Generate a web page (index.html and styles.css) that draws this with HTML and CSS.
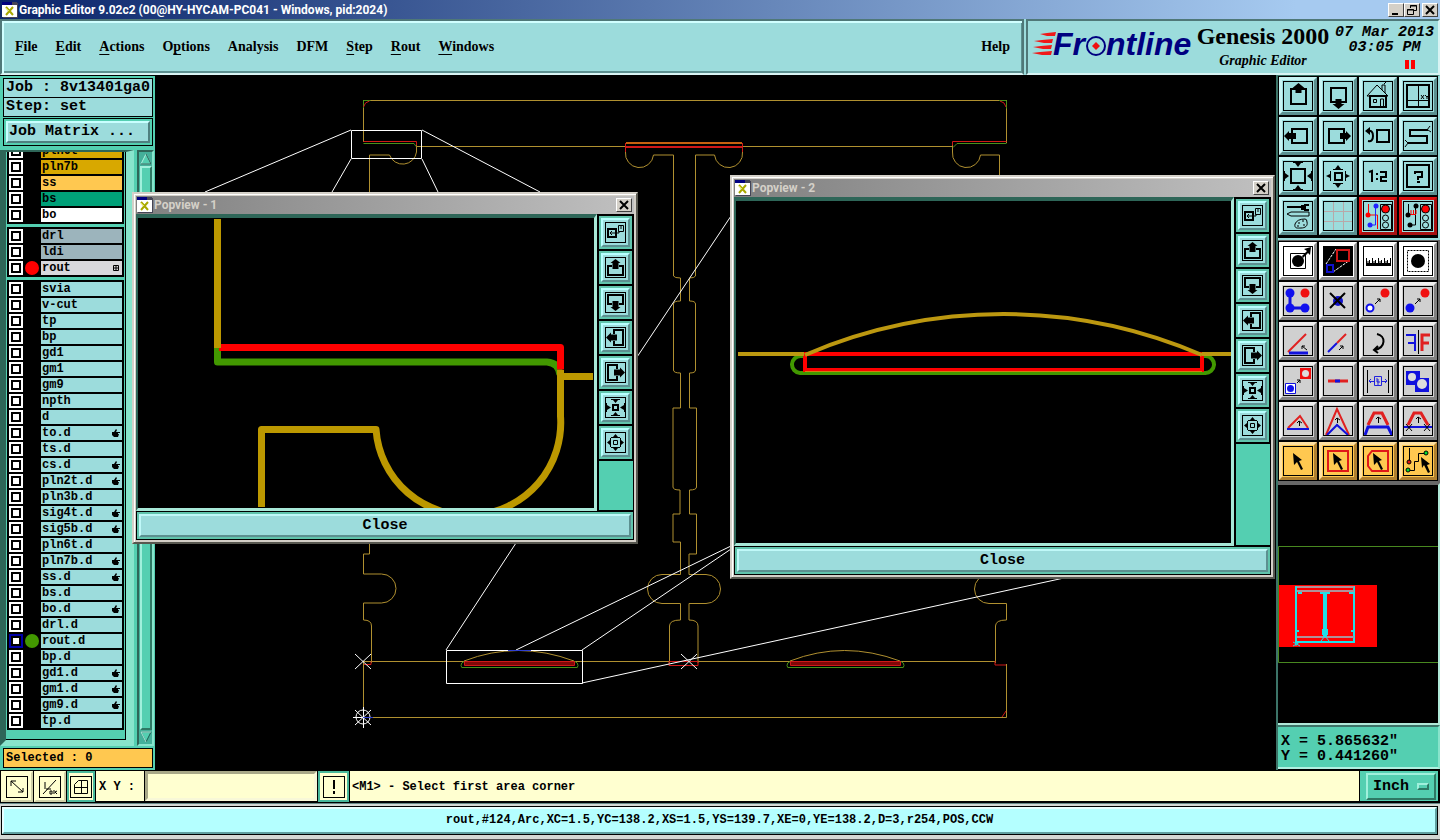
FILE: index.html
```html
<!DOCTYPE html>
<html lang="en">
<head>
<meta charset="utf-8">
<title>Graphic Editor 9.02c2</title>
<link rel="stylesheet" href="styles.css">
</head>
<body>
<svg class="defs" aria-hidden="true">
  <symbol id="app" viewBox="0 0 16 16"><path fill="#fff" d="M0 0h15v15H0z"/><path fill="#000080" d="M0 0h10v3H0z"/><path fill="#445" d="M10 0h5v3h-5zM15 1h1v15H1v-1h14z"/><path d="M4 5l7 8M11 5l-7 8" stroke="#a8a800" stroke-width="2"/><path d="M4 6l3 3" stroke="#e8e860"/></symbol>
  <symbol id="x" viewBox="0 0 12 12"><path d="M2 2l8 8M10 2l-8 8" stroke="#000" stroke-width="2"/></symbol>
  <symbol id="hand" viewBox="0 0 8 8"><path d="M0 3h2l2-3 1 1-1 2h4v1H6v1h1L6 8H2L0 6z"/></symbol>
  <symbol id="s-pop" viewBox="1 1 19 19"><g fill="none" stroke="#000"><path stroke-width="2" d="M3 7h8v8H3z"/><path d="M5 11h9V9M7 9l-2 2 2 2M13.500 3.500h5v6h-5zM16 3v4"/></g></symbol>
  <symbol id="s-up" viewBox="1 1 19 19"><path fill="none" stroke="#000" stroke-width="2" d="M7 9H3v9h15V9h-4"/><path d="M10.500 2l5 4h-2v6h-6V6h-2z"/></symbol>
  <symbol id="s-down" viewBox="1 1 19 19"><path fill="none" stroke="#000" stroke-width="2" d="M7 12H3V3h15v9h-4"/><path d="M10.500 19l5-4h-2V9h-6v6h-2z"/></symbol>
  <symbol id="s-left" viewBox="1 1 19 19"><path fill="none" stroke="#000" stroke-width="2" d="M9 7V3h9v15H9v-4"/><path d="M1 10.500l5-5v2h6v6H6v2z"/></symbol>
  <symbol id="s-right" viewBox="1 1 19 19"><path fill="none" stroke="#000" stroke-width="2" d="M12 7V3H3v15h9v-4"/><path d="M20 10.500l-5-5v2H9v6h6v2z"/></symbol>
  <symbol id="s-in" viewBox="1 1 19 19"><path fill="none" stroke="#000" stroke-width="2" d="M8 8h5v5H8z"/><path d="M6 2h9v1h-2l-2.500 3L8 3H6zM6 19h9v-1h-2l-2.500-3L8 18H6zM1 6h1v2l4 2.500L2 13v2H1zM20 6h-1v2l-4 2.500 4 2.500v2h1z"/></symbol>
  <symbol id="s-out" viewBox="1 1 19 19"><path fill="none" stroke="#000" d="M8.500 8.500h4v4h-4z"/><path d="M6 6V5h2l2.500-3L13 5h2v1zM6 15v1h2l2.500 3L13 16h2v-1zM6 6H5v2l-3 2.500L5 13v2h1zM15 6h1v2l3 2.500L16 13v2h-1z"/></symbol>
</svg>

<header class="titlebar">
  <svg class="app"><use href="#app"/></svg>
  <h1 class="caption">Graphic Editor 9.02c2 (00@HY-HYCAM-PC041 - Windows, pid:2024)</h1>
  <button class="winbtn" aria-label="Minimize"><svg viewBox="0 0 12 12"><path d="M2 9h6v2H2z"/></svg></button>
  <button class="winbtn" aria-label="Restore"><svg viewBox="0 0 12 12"><path fill="none" stroke="#000" d="M4.500 4V1.500h6v5H8M4 2h7M1.500 5.500h6v5h-6zM1 6h7"/></svg></button>
  <button class="winbtn apart" aria-label="Close"><svg><use href="#x"/></svg></button>
</header>

<div class="banner">
  <nav class="menu">
    <button><u>F</u>ile</button><button><u>E</u>dit</button><button><u>A</u>ctions</button><button>O<u>p</u>tions</button><button>Analysis</button><button>DFM</button><button><u>S</u>tep</button><button><u>R</u>out</button><button><u>W</u>indows</button>
    <button class="help">Help</button>
  </nav>
  <div class="brand">
    <svg class="logo" viewBox="1031 24 164 50" role="img" aria-label="Frontline">
      <g fill="#f01818"><path d="M1040 37l7-1 9-1-1 4h-8zM1034 44l8-1 11-1-1 4h-8zM1033 50l8-1 11-1-1 4h-8zM1032 56l8-1 12-1-1 4h-9z"/></g>
      <g font-family="Liberation Sans, Arial, sans-serif" font-size="32" font-weight="bold" font-style="italic" fill="#000080"><text x="1053" y="58">Fr</text><text x="1106" y="58">ntline</text></g>
      <circle cx="1096" cy="49" r="9" fill="none" stroke="#000080" stroke-width="2"/><path fill="#f01010" d="M1096 45l4 4-4 4-4-4z"/>
    </svg>
    <div class="product"><strong>Genesis 2000</strong><em>Graphic Editor</em></div>
    <div class="clock"><time>07 Mar 2013</time><time>03:05 PM</time><i class="pause"></i></div>
  </div>
</div>

<main class="main">
  <aside class="side">
    <div class="field">Job : 8v13401ga0</div>
    <div class="field">Step: set</div>
    <div class="slot"><button class="matrix">Job Matrix ...</button></div>
    <div class="listwrap">
      <div class="list">
        <ul class="group">
          <li><label class="layer"><input class="tick" type="checkbox"><i class="dot"></i><span class="name gold">pln6t</span></label></li>
          <li><label class="layer"><input class="tick" type="checkbox"><i class="dot"></i><span class="name gold">pln7b</span></label></li>
          <li><label class="layer"><input class="tick" type="checkbox"><i class="dot"></i><span class="name amber">ss</span></label></li>
          <li><label class="layer"><input class="tick" type="checkbox"><i class="dot"></i><span class="name green">bs</span></label></li>
          <li><label class="layer"><input class="tick" type="checkbox"><i class="dot"></i><span class="name white">bo</span></label></li>
        </ul>
        <ul class="group">
          <li><label class="layer"><input class="tick" type="checkbox"><i class="dot"></i><span class="name slate">drl</span></label></li>
          <li><label class="layer"><input class="tick" type="checkbox"><i class="dot"></i><span class="name slate">ldi</span></label></li>
          <li><label class="layer"><input class="tick" type="checkbox"><i class="dot red"></i><span class="name grey">rout<svg class="mark" viewBox="0 0 8 8"><path fill="none" stroke="#000" d="M1.500 1.500h5v5h-5zM4 1v6M1 4h6"/></svg></span></label></li>
        </ul>
        <ul class="group">
          <li><label class="layer"><input class="tick" type="checkbox"><i class="dot"></i><span class="name">svia</span></label></li>
          <li><label class="layer"><input class="tick" type="checkbox"><i class="dot"></i><span class="name">v-cut</span></label></li>
          <li><label class="layer"><input class="tick" type="checkbox"><i class="dot"></i><span class="name">tp</span></label></li>
          <li><label class="layer"><input class="tick" type="checkbox"><i class="dot"></i><span class="name">bp</span></label></li>
          <li><label class="layer"><input class="tick" type="checkbox"><i class="dot"></i><span class="name">gd1</span></label></li>
          <li><label class="layer"><input class="tick" type="checkbox"><i class="dot"></i><span class="name">gm1</span></label></li>
          <li><label class="layer"><input class="tick" type="checkbox"><i class="dot"></i><span class="name">gm9</span></label></li>
          <li><label class="layer"><input class="tick" type="checkbox"><i class="dot"></i><span class="name">npth</span></label></li>
          <li><label class="layer"><input class="tick" type="checkbox"><i class="dot"></i><span class="name">d</span></label></li>
          <li><label class="layer"><input class="tick" type="checkbox"><i class="dot"></i><span class="name">to.d<svg class="mark"><use href="#hand"/></svg></span></label></li>
          <li><label class="layer"><input class="tick" type="checkbox"><i class="dot"></i><span class="name">ts.d</span></label></li>
          <li><label class="layer"><input class="tick" type="checkbox"><i class="dot"></i><span class="name">cs.d<svg class="mark"><use href="#hand"/></svg></span></label></li>
          <li><label class="layer"><input class="tick" type="checkbox"><i class="dot"></i><span class="name">pln2t.d<svg class="mark"><use href="#hand"/></svg></span></label></li>
          <li><label class="layer"><input class="tick" type="checkbox"><i class="dot"></i><span class="name">pln3b.d</span></label></li>
          <li><label class="layer"><input class="tick" type="checkbox"><i class="dot"></i><span class="name">sig4t.d<svg class="mark"><use href="#hand"/></svg></span></label></li>
          <li><label class="layer"><input class="tick" type="checkbox"><i class="dot"></i><span class="name">sig5b.d<svg class="mark"><use href="#hand"/></svg></span></label></li>
          <li><label class="layer"><input class="tick" type="checkbox"><i class="dot"></i><span class="name">pln6t.d</span></label></li>
          <li><label class="layer"><input class="tick" type="checkbox"><i class="dot"></i><span class="name">pln7b.d<svg class="mark"><use href="#hand"/></svg></span></label></li>
          <li><label class="layer"><input class="tick" type="checkbox"><i class="dot"></i><span class="name">ss.d<svg class="mark"><use href="#hand"/></svg></span></label></li>
          <li><label class="layer"><input class="tick" type="checkbox"><i class="dot"></i><span class="name">bs.d</span></label></li>
          <li><label class="layer"><input class="tick" type="checkbox"><i class="dot"></i><span class="name">bo.d<svg class="mark"><use href="#hand"/></svg></span></label></li>
          <li><label class="layer"><input class="tick" type="checkbox"><i class="dot"></i><span class="name">drl.d</span></label></li>
          <li><label class="layer"><input class="tick" type="checkbox" checked><i class="dot leaf"></i><span class="name">rout.d</span></label></li>
          <li><label class="layer"><input class="tick" type="checkbox"><i class="dot"></i><span class="name">bp.d</span></label></li>
          <li><label class="layer"><input class="tick" type="checkbox"><i class="dot"></i><span class="name">gd1.d<svg class="mark"><use href="#hand"/></svg></span></label></li>
          <li><label class="layer"><input class="tick" type="checkbox"><i class="dot"></i><span class="name">gm1.d<svg class="mark"><use href="#hand"/></svg></span></label></li>
          <li><label class="layer"><input class="tick" type="checkbox"><i class="dot"></i><span class="name">gm9.d<svg class="mark"><use href="#hand"/></svg></span></label></li>
          <li><label class="layer"><input class="tick" type="checkbox"><i class="dot"></i><span class="name">tp.d</span></label></li>
        </ul>
      </div>
      <div class="scroll">
        <svg class="arrow" viewBox="0 0 12 12"><path fill="#54cfb1" stroke="#b0f0e0" d="M1 11L6 1l5 10z"/><path stroke="#1c5c50" d="M6 1l5 10H1"  fill="none"/></svg>
        <div class="thumb"></div>
        <svg class="arrow" viewBox="0 0 12 12"><path fill="#54cfb1" stroke="#1c5c50" d="M1 1l5 10L11 1z"/><path stroke="#b0f0e0" fill="none" d="M11 1H1l5 10"/></svg>
      </div>
    </div>
    <div class="field selected">Selected : 0</div>
  </aside>

  <div class="canvas">
    <svg class="art" viewBox="155 75 1121 695" preserveAspectRatio="xMinYMin meet" fill="none">
      <g stroke="#b09030">
        <path d="M363.500 100.500H1006M363.500 100v42M1006.500 100v43M416 146.500h210M742 146.500h210"/>
        <path d="M416.500 142v10a14 14 0 0 1-27 3h-20v399h-6v20h18a14 14 0 0 1 0 29h-18v17q8 0 8 6v37"/>
        <path d="M625.500 147v5a14 14 0 0 0 28 3h20V276q1 2 7 2V301q-7 0-7 3V370q0 3 7 3V408H673V487q0 3 7 3V514H673V542H680.500V574.500H662a14 14 0 0 0 0 29H680.500V620q-11 0-11 6V663"/>
        <path d="M742.500 147v5a14 14 0 0 1-28 3h-19V276q-1 2-6 2V301q6 0 6 3V370q0 3-6 3V408H696.500V487q0 3-7 3V514H696.500V554H689V574.500H706a14 14 0 0 1 0 29H689V620q9 0 9 6V663"/>
        <path d="M952.500 143v9a14 14 0 0 0 28 3h19V554h7v20.500H989a14 14 0 0 0 0 29h17.500V620q-11 0-11 6V663"/>
        <path d="M363.500 661.500h632M363.500 661v56.500H1006.500V664"/>
        <path d="M464 661q54-21 110 0M790 661q54-21 110 0"/>
      </g>
      <g stroke="#489018"><path d="M363.500 143.500H414l2 3M1006.500 143.500H957l-4 4M363.500 108v-7.500h7M999 100.500h7.500v8M464 661.500q-3 1-3 4t3 2h111q3 1 3-2t-3-4M790 661.500q-3 1-3 4t3 2h111q3 1 3-2t-3-4"/></g>
      <g stroke="#d01818"><path d="M363.500 141.500h53v4M1006.500 141.500h-54v4M363.500 107q1-5 6-6M1000 101q5 1 6 6M625.500 152v-9M742.500 152v-9M464.500 661.500h110v4h-110zM790.500 661.500h110v4h-110zM364 664.500h7v-3M995 661v4h11M669 661.500h29v4h-29zM1002 717l4-6"/><path stroke-width="2" d="M626 147h116"/><path stroke="#c86010" stroke-width="2" d="M626 143h116"/></g>
      <path fill="#800808" d="M465 662h109v3H465zM791 662h109v3H791z"/>
      <g stroke="#fff">
        <path d="M351.500 130.500h70v28h-70zM351 130l-146 62M351 159l-19 33M422 130l118 62M422 159l16 33M446.500 650.500h136v33h-136zM446 650l70-107M516 650l215-104M582 650l149-101M582 683l482-105M637 357l94-141"/>
        <path d="M355 654l16 15M371 654l-16 15M681 654l16 15M697 654l-16 15M355 710l16 15M371 710l-16 15M353 717.500h20M363.500 707v21"/><circle cx="363" cy="717" r="7"/>
      </g>
      <path stroke="#3040d0" d="M508 650.500h23M363 717.500h10"/>
    </svg>
  </div>

  <aside class="tools">
    <div class="palette">
      <button class="tool" aria-label="Pan up"><svg viewBox="1 1 28 28"><path fill="none" stroke="#000" stroke-width="2" d="M8 8h15v15H8z"/><path d="M15.500 2l6 5h-3v5h-6V7h-3z"/></svg></button>
      <button class="tool" aria-label="Pan down"><svg viewBox="1 1 28 28"><path fill="none" stroke="#000" stroke-width="2" d="M8 7h15v14H8z"/><path d="M15.500 28l6-5h-3v-5h-6v5h-3z"/></svg></button>
      <button class="tool" aria-label="Home"><svg viewBox="1 1 28 28"><g fill="none" stroke="#000"><path stroke-width="2" d="M7 15h16v11H7z"/><path d="M4 15L14 4l11 11zM19 9V4h3v8M21 3l2-2M10.500 18.500h3v3h-3zM17.500 26v-8h3v8"/></g></svg></button>
      <button class="tool" aria-label="Zoom at XY"><svg viewBox="1 1 28 28"><path fill="none" stroke="#000" stroke-width="2" d="M4 4h22v22H4z"/><path fill="none" stroke="#000" d="M15.500 4v22M4 19.500h22M18 14l3 4M21 14l-3 4M22 14l2 2 2-2M24 16v2"/></svg></button>
      <button class="tool" aria-label="Pan left"><svg viewBox="1 1 28 28"><path fill="none" stroke="#000" stroke-width="2" d="M9 8h15v14H9z"/><path d="M1 15l5-5v2h7v6H6v2z"/></svg></button>
      <button class="tool" aria-label="Pan right"><svg viewBox="1 1 28 28"><path fill="none" stroke="#000" stroke-width="2" d="M6 8h15v14H6z"/><path d="M28 15l-5-5v2h-6v6h6v2z"/></svg></button>
      <button class="tool" aria-label="Previous view"><svg viewBox="1 1 28 28"><g fill="none" stroke="#000" stroke-width="2"><path d="M14 9h12v12H14z"/><path d="M5 10q5-1 5 5t-5 5"/></g><path d="M2 10l5-4v8z"/></svg></button>
      <button class="tool" aria-label="Serpentine view"><svg viewBox="1 1 28 28"><path fill="none" stroke="#000" stroke-width="2" d="M25 9H7v6h17v7H5"/><path fill="none" stroke="#000" d="M24 9l3-4M25 9l3 2M5 22l-3-3M5 22l-3 4"/></svg></button>
      <button class="tool" aria-label="Zoom in"><svg viewBox="1 1 28 28"><path fill="none" stroke="#000" stroke-width="2" d="M8 8h14v14H8z"/><path d="M10 1h10v1h-2l-3 4-3-4h-2zM10 29h10v-1h-2l-3-4-3 4h-2zM1 10v10h1v-2l4-3-4-3v-2zM29 10v10h-1v-2l-4-3 4-3v-2z"/></svg></button>
      <button class="tool" aria-label="Zoom out"><svg viewBox="1 1 28 28"><path fill="none" stroke="#000" stroke-width="2" d="M12 12h7v7h-7z"/><path d="M10 9V8h2l3-4 3 4h2v1zM10 22v1h2l3 4 3-4h2v-1zM8 10H7v3l-4 2 4 2v3h1zM22 10h1v3l4 2-4 2v3h-1z"/></svg></button>
      <button class="tool" aria-label="Zoom one to two"><svg viewBox="1 1 28 28"><path fill="none" stroke="#000" stroke-width="2" d="M6 11l3-1v11M13 13h2M13 18h2M17 11h6v5h-5v4h6"/></svg></button>
      <button class="tool" aria-label="Query"><svg viewBox="1 1 28 28"><path fill="none" stroke="#000" stroke-width="2" d="M4 4h22v22H4zM12 13v-2h7v5h-4v3M14 21h3"/></svg></button>
      <button class="tool" aria-label="Settings"><svg viewBox="1 1 28 28"><path d="M4 5h15v2H4zM18 4h4v5h-4zM21 3h5v2h-3v3h3v2h-5z"/><path fill="none" stroke="#000" d="M4 13l4-2h18v4H8zM22 18q-8 0-10 5c-1 5 3 4 6 4 4 0 7-2 6-6q0-3-2-3zM15 22h2M19 20h2M14 25h2M20 24h2"/></svg></button>
      <button class="tool" aria-label="Grid"><svg viewBox="1 1 28 28"><path fill="none" stroke="#b8a8a8" d="M10.500 1v28M20.500 1v28M1 10.500h28M1 20.500h28"/></svg></button>
      <button class="tool alert" aria-label="Snap layer"><svg viewBox="1 1 28 28"><g fill="none"><path stroke="#f00" d="M5.500 3v11h9v14"/><path stroke="#22f" d="M12.500 6v18H6"/><path stroke="#000" d="M17.500 3.500h11v25h-11z"/></g><g fill="#f00"><circle cx="5" cy="14" r="2.500"/><circle cx="22.500" cy="8" r="4" stroke="#000"/></g><g fill="#22f"><circle cx="13" cy="5" r="2.500"/><circle cx="7" cy="24" r="2.500"/></g><g fill="none" stroke="#000"><circle cx="22.500" cy="17" r="3"/><circle cx="22.500" cy="24" r="3"/></g></svg></button>
      <button class="tool alert" aria-label="Snap profile"><svg viewBox="1 1 28 28"><g fill="none" stroke="#000"><path d="M5.500 3v10M12.500 5v19H7M17.500 3.500h11v25h-11z"/><circle cx="22.500" cy="17" r="3"/><circle cx="22.500" cy="24" r="3"/></g><circle cx="22.500" cy="8" r="4" fill="#f00" stroke="#000"/><path d="M6 13.500h7M8 9v4M10.500 9v4M13 9v4" stroke="#f00"/><circle cx="5" cy="14" r="2.500"/><circle cx="13" cy="5" r="2.500"/><circle cx="7" cy="24" r="2.500"/></svg></button>
    </div>
    <div class="palette ops">
      <button class="tool paper" aria-label="Select feature"><svg viewBox="1 1 28 28"><path fill="none" stroke="#000" d="M7.500 7.500h15v15h-15z"/><circle cx="15" cy="15" r="6"/><path d="M19 10l5-5-3-2 7-2-1 8-2-2-5 5z"/></svg></button>
      <button class="tool paper" aria-label="Popview"><svg viewBox="1 1 28 28"><path fill="#000" d="M1 1h28v28H1z"/><path stroke="#fff" stroke-dasharray="3 1" d="M3 18L13 3M10 26l17-12"/><path fill="none" stroke="#d01818" stroke-width="2" d="M14 4h12v11H14z"/><path fill="none" stroke="#11c" stroke-width="2" d="M4 19h6v7H4z"/></svg></button>
      <button class="tool paper" aria-label="Measure"><svg viewBox="1 1 28 28"><path d="M3 17h25v3H3z"/><path stroke="#000" d="M3.500 12v6M6.500 14v4M9.500 12v6M12.500 14v4M15.500 12v6M18.500 14v4M21.500 12v6M24.500 14v4M27.500 12v6M5 15v3M11 15v3M17 15v3M23 15v3"/></svg></button>
      <button class="tool paper" aria-label="Area select"><svg viewBox="1 1 28 28"><path fill="none" stroke="#000" stroke-dasharray="2 1" d="M4.500 4.500h21v21h-21z"/><circle cx="15" cy="15" r="7"/></svg></button>

      <button class="tool ash" aria-label="Chain"><svg viewBox="1 1 28 28"><path stroke="#11d" stroke-width="3" fill="none" d="M7 7v15h15"/><g fill="#11e"><circle cx="7" cy="7" r="4.500"/><circle cx="7" cy="22" r="4.500"/><circle cx="22" cy="22" r="4.500"/></g><circle cx="22" cy="7" r="4.500" fill="#f01010"/></svg></button>
      <button class="tool ash" aria-label="Delete"><svg viewBox="1 1 28 28"><circle cx="15" cy="15" r="5" fill="#11c"/><path stroke="#000" stroke-width="2" d="M7 7l15 15M22 7L7 22"/></svg></button>
      <button class="tool ash" aria-label="Move"><svg viewBox="1 1 28 28"><circle cx="22" cy="7" r="4.500" fill="#f01010"/><circle cx="7" cy="22" r="3.500" fill="#fff" stroke="#11e" stroke-width="2"/><path fill="none" stroke="#000" d="M12 18l5-5M14 13h3v3"/></svg></button>
      <button class="tool ash" aria-label="Copy"><svg viewBox="1 1 28 28"><circle cx="22" cy="7" r="4.500" fill="#f01010"/><circle cx="7" cy="22" r="4.500" fill="#11e"/><path fill="none" stroke="#000" d="M12 18l5-5M14 13h3v3"/></svg></button>

      <button class="tool ash" aria-label="Rotate line"><svg viewBox="1 1 28 28"><path stroke="#e02020" stroke-width="2" d="M5 26L23 8"/><path stroke="#11d" stroke-width="3" d="M6 27h19"/><path fill="none" stroke="#000" d="M24 24l-5-4M19 23v-3h3"/></svg></button>
      <button class="tool ash" aria-label="Extend line"><svg viewBox="1 1 28 28"><path stroke="#11d" stroke-width="2" d="M5 26l9-9"/><path stroke="#e02020" stroke-width="2" d="M14 17l9-9"/><path fill="none" stroke="#000" d="M16 24l4-4M17 20h3v3"/></svg></button>
      <button class="tool ash" aria-label="Rotate"><svg viewBox="1 1 28 28"><path fill="none" stroke="#000" stroke-width="2" d="M14 8c9 2 9 13-2 16M15 20l-4 4 4 3"/></svg></button>
      <button class="tool ash" aria-label="Mirror"><svg viewBox="1 1 28 28"><path fill="none" stroke="#11d" stroke-width="2" d="M3 9h9v16M5 17h7"/><path fill="none" stroke="#e02020" stroke-width="3" d="M27 9h-8v16M19 17h7"/><path stroke="#000" d="M15.500 4v24"/></svg></button>

      <button class="tool ash" aria-label="Copy to layer"><svg viewBox="1 1 28 28"><path fill="#fff" stroke="#11d" d="M2.500 17.500h10v10h-10z"/><circle cx="7.500" cy="22.500" r="3.500" fill="#11e"/><path fill="#f01010" d="M17 2h11v11H17z"/><circle cx="22.500" cy="7.500" r="3.500" fill="#ddd"/><path fill="none" stroke="#000" d="M14 17l3-3M14 14h3v3"/></svg></button>
      <button class="tool ash" aria-label="Split"><svg viewBox="1 1 28 28"><path stroke="#e02020" stroke-width="3" d="M5 15h20"/><path stroke="#11d" stroke-width="3" d="M12 15h5"/></svg></button>
      <button class="tool ash" aria-label="Spacing"><svg viewBox="1 1 28 28"><path stroke="#000" d="M4.500 4v23M25.500 4v23"/><path fill="none" stroke="#22d" d="M6 15.500h5M19 15.500h5M8 13l-2 2 2 2M22 13l2 2-2 2M11.500 10.500h7v9h-7zM14 12v4h3M15 13v6"/></svg></button>
      <button class="tool ash" aria-label="Merge"><svg viewBox="1 1 28 28"><path fill="#11d" d="M3 5h14v7h9v14H12v-7H3z"/><circle cx="9" cy="11" r="4" fill="#ddd"/><circle cx="19" cy="18" r="5" fill="#ddd"/></svg></button>

      <button class="tool ash" aria-label="Stretch one"><svg viewBox="1 1 28 28"><path fill="none" stroke="#e02020" stroke-width="2" d="M5 22L17 10l8 12"/><path stroke="#11d" stroke-width="2" d="M4 23h22"/><path fill="none" stroke="#000" d="M16.500 20v-5M14 17l2-2 3 2"/></svg></button>
      <button class="tool ash" aria-label="Stretch two"><svg viewBox="1 1 28 28"><path fill="none" stroke="#e02020" stroke-width="2" d="M3 29L14 3l12 26"/><path fill="none" stroke="#11d" stroke-width="2" d="M4 29l10-10 11 10"/><path fill="none" stroke="#000" d="M14.500 17v-5M12 14l2-2 3 2"/></svg></button>
      <button class="tool ash" aria-label="Stretch three"><svg viewBox="1 1 28 28"><path fill="none" stroke="#e02020" stroke-width="3" d="M5 19l6-12h8l6 12"/><path fill="none" stroke="#11d" stroke-width="3" d="M2 29l3-8h20l4 8"/><path fill="none" stroke="#000" d="M15.500 17v-6M13 13l2-2 3 2"/></svg></button>
      <button class="tool ash" aria-label="Stretch four"><svg viewBox="1 1 28 28"><path fill="none" stroke="#e02020" stroke-width="3" d="M5 19l6-12h7l7 12"/><path stroke="#11d" stroke-width="2" d="M1 21h28"/><path fill="none" stroke="#000" d="M15.500 17v-6M13 13l2-2 3 2M3 18l6 7M9 18l-6 7M21 18l6 7M27 18l-6 7"/></svg></button>

      <button class="tool sun" aria-label="Pointer"><svg viewBox="1 1 28 28"><path d="M10 7l9 7-3 1 4 8-2 1-4-8-3 3z"/></svg></button>
      <button class="tool sun" aria-label="Pointer in box"><svg viewBox="1 1 28 28"><path fill="none" stroke="#e01818" stroke-width="2" d="M5 5h20v20H5z"/><path d="M10 7l9 7-3 1 4 8-2 1-4-8-3 3z"/></svg></button>
      <button class="tool sun" aria-label="Pointer in polygon"><svg viewBox="1 1 28 28"><path fill="none" stroke="#e01818" stroke-width="2" d="M9 5h16v20H9l-4-5V10z"/><path d="M10 7l9 7-3 1 4 8-2 1-4-8-3 3z"/></svg></button>
      <button class="tool sun" aria-label="Pointer on net"><svg viewBox="1 1 28 28"><path fill="none" stroke="#000" d="M6.500 2v14M6 24.500h5.500v-9h4v-8H23"/><circle cx="6" cy="16" r="2" fill="#e01010" stroke="#000"/><circle cx="23" cy="7" r="2" fill="#0d3" stroke="#000"/><circle cx="5" cy="24" r="2" fill="#0d3" stroke="#000"/><path d="M18 11l9 7-3 1 3 7-2 1-4-8-2 3z"/></svg></button>
    </div>
    <svg class="overview" viewBox="1278 486 160 238" preserveAspectRatio="xMinYMin meet" role="img" aria-label="Overview">
      <path fill="#f00" d="M1278 586h99v62h-99z"/>
      <path fill="none" stroke="#488820" d="M1438 547.500h-159.500v116H1438"/>
      <g fill="none" stroke="#20e0e8" stroke-width="2"><path d="M1296 588h58v55h-58zM1296 638h58"/><path stroke="#b09098" d="M1297 588h57M1297 592h57M1297 638h57"/><path stroke-width="4" d="M1325 593v45"/><path d="M1320 594h10M1298 594h4M1349 594h4M1295 632h4M1351 632h4"/><path stroke-width="6" d="M1322 633h6"/><path stroke-width="1" d="M1293 643l7 4M1300 643l-7 4M1296 636v11M1321 642l4-5 4 5"/></g>
    </svg>
    <div class="coords"><div>X = 5.865632"</div><div>Y = 0.441260"</div></div>
  </aside>

  <section class="popview first">
    <header class="poptitle"><svg class="app"><use href="#app"/></svg><h2 class="caption">Popview - 1</h2><button class="winbtn" aria-label="Close"><svg><use href="#x"/></svg></button></header>
    <div class="popbody">
      <svg class="popart" viewBox="138 218 456 290" preserveAspectRatio="xMinYMin meet" fill="none" stroke-width="7">
        <path stroke="#429800" stroke-linejoin="round" d="M217.500 345v17H547q12 1 13 13"/>
        <path stroke="#f00" stroke-linejoin="round" d="M219 347.500h341.500v22"/>
        <g stroke="#bc9800"><path d="M217.500 219v129" /><path stroke-linejoin="round" d="M560.500 370v46A92 92 0 0 1 376 429.500H261.500V507M562 376.500h31"/></g>
      </svg>
      <div class="poptools">
        <div class="cell"><button aria-label="Grab view"><svg><use href="#s-pop"/></svg></button></div>
        <div class="cell"><button aria-label="Up"><svg><use href="#s-up"/></svg></button></div>
        <div class="cell"><button aria-label="Down"><svg><use href="#s-down"/></svg></button></div>
        <div class="cell"><button aria-label="Left"><svg><use href="#s-left"/></svg></button></div>
        <div class="cell"><button aria-label="Right"><svg><use href="#s-right"/></svg></button></div>
        <div class="cell"><button aria-label="Zoom in"><svg><use href="#s-in"/></svg></button></div>
        <div class="cell"><button aria-label="Zoom out"><svg><use href="#s-out"/></svg></button></div>
      </div>
    </div>
    <div class="popfoot"><button>Close</button></div>
  </section>

  <section class="popview second">
    <header class="poptitle"><svg class="app"><use href="#app"/></svg><h2 class="caption">Popview - 2</h2><button class="winbtn" aria-label="Close"><svg><use href="#x"/></svg></button></header>
    <div class="popbody">
      <svg class="popart" viewBox="736 201 495 342" preserveAspectRatio="xMinYMin meet" fill="none" stroke-width="4">
        <path stroke="#429800" d="M805 356h-4a8 8 0 0 0-1 17h405a8 8 0 0 0 1-17h-4"/>
        <path stroke="#f00" d="M805 354h397v16H805z"/>
        <path stroke="#d08010" stroke-width="1" d="M805 371.500h397"/>
        <path stroke="#bc9810" d="M738 354h66M1202 354h29M805 355A502 502 0 0 1 1202 355"/>
      </svg>
      <div class="poptools">
        <div class="cell"><button aria-label="Grab view"><svg><use href="#s-pop"/></svg></button></div>
        <div class="cell"><button aria-label="Up"><svg><use href="#s-up"/></svg></button></div>
        <div class="cell"><button aria-label="Down"><svg><use href="#s-down"/></svg></button></div>
        <div class="cell"><button aria-label="Left"><svg><use href="#s-left"/></svg></button></div>
        <div class="cell"><button aria-label="Right"><svg><use href="#s-right"/></svg></button></div>
        <div class="cell"><button aria-label="Zoom in"><svg><use href="#s-in"/></svg></button></div>
        <div class="cell"><button aria-label="Zoom out"><svg><use href="#s-out"/></svg></button></div>
      </div>
    </div>
    <div class="popfoot"><button>Close</button></div>
  </section>
</main>

<div class="command">
  <button class="cmd" aria-label="Diagonal"><svg viewBox="0 0 20 20"><path fill="none" stroke="#000" d="M4 4l12 11M4 9V4h5M16 11v4h-5"/></svg></button>
  <button class="cmd" aria-label="Angle"><svg viewBox="0 0 20 20"><path fill="none" stroke="#000" d="M3 17L16 3M5 5v7M6 12h5M10 17h2v-3h-2zM14 13v4M17 14l-2 1 2 2"/></svg></button>
  <button class="cmd on" aria-label="Grid snap"><svg viewBox="0 0 20 20"><path fill="none" stroke="#000" d="M3.500 7.500l4-4h9v13h-13zM10.500 3v13M3 10.500h13"/></svg></button>
  <label class="xy" for="xy">X Y :</label>
  <input class="entry" id="xy" type="text" autocomplete="off">
  <button class="cmd bang" aria-label="Execute"><svg viewBox="0 0 20 20"><path d="M9 3h2v9H9zM9 14h2v3H9z"/></svg></button>
  <output class="message">&lt;M1&gt; - Select first area corner</output>
  <div class="unitbox"><button class="unit">Inch<i class="knob"></i></button></div>
</div>
<footer class="status"><div class="statustext">rout,#124,Arc,XC=1.5,YC=138.2,XS=1.5,YS=139.7,XE=0,YE=138.2,D=3,r254,POS,CCW</div></footer>
</body>
</html>
```
FILE: styles.css
```css
* { box-sizing: border-box; }
html, body { height: 100%; }
body {
  margin: 0;
  display: flex;
  flex-direction: column;
  background: #000;
  color: #000;
  overflow: hidden;
  font: bold 12px "Liberation Mono", "Courier New", monospace;
}
button { font: inherit; color: inherit; padding: 0; margin: 0; border-radius: 0; }
svg { display: block; }
h1, h2, ul { margin: 0; padding: 0; }
li { list-style: none; }
.defs { display: none; }

.titlebar {
  flex: none;
  height: 19px;
  display: flex;
  align-items: center;
  padding: 0 2px;
  background: linear-gradient(90deg, #0a246a, #a6caf0 90%);
  color: #fff;
}
.app { width: 16px; height: 16px; flex: none; }
.caption { flex: 1; margin-left: 1px; font: bold 12px/18px Roboto, "Noto Sans", sans-serif; white-space: nowrap; }
.winbtn {
  width: 16px;
  height: 14px;
  display: grid;
  place-items: center;
  background: #d4d0c8;
  border: 1px solid;
  border-color: #fff #404040 #404040 #fff;
}
.winbtn svg { width: 12px; height: 12px; }
.apart { margin-left: 2px; }

.banner { flex: none; display: flex; height: 56px; background: #9cdcdc; }
.menu {
  flex: 1;
  display: flex;
  align-items: center;
  gap: 18px;
  padding: 0 12px 0 13px;
  border: 2px solid #4f7878;
  border-color: #4f7878 #4f7878 #d8f4f4 #4f7878;
  box-shadow: inset 2px 2px #d0ffff, inset -1px -2px #5c9090;
}
.menu button { border: 0; background: none; font: bold 14px/18px "Liberation Serif", "Times New Roman", serif; }
.menu u { text-underline-offset: 3px; }
.menu .help { margin-left: auto; }
.brand {
  width: 414px;
  flex: none;
  display: flex;
  margin-left: 2px;
  border: 2px solid;
  border-color: #4f7878 #d8f4f4 #d8f4f4 #4f7878;
}
.logo { width: 164px; height: 50px; margin-left: 3px; }
.product { width: 136px; display: flex; flex-direction: column; align-items: center; font-family: "Liberation Serif", serif; white-space: nowrap; }
.product strong { font-size: 24px; line-height: 30px; }
.product em { font-size: 14px; line-height: 20px; }
.clock { flex: 1; display: flex; flex-direction: column; align-items: center; font-size: 15px; line-height: 15px; font-style: italic; white-space: nowrap; padding-top: 4px; }
.pause { width: 10px; height: 9px; border: solid #f00; border-width: 0 4px; margin: 5px 0 0 50px; }

.main { flex: 1; min-height: 0; display: flex; position: relative; }
.side {
  width: 155px;
  flex: none;
  display: flex;
  flex-direction: column;
  padding: 2px 2px 2px 3px;
  border-top: 1px solid #000;
  background: #54cfb1;
}
.field, .slot { border: 1px solid #000; background: #9cdcdc; flex: none; }
.field { height: 20px; padding-left: 2px; font-size: 15px; line-height: 18px; white-space: nowrap; }
.field + .field { margin-top: -1px; }
.slot { margin-top: 1px; padding: 2px; background: #54cfb1; height: 28px; }
.matrix { width: 100%; height: 22px; text-align: left; padding-left: 1px; font-size: 15px; line-height: 16px; background: #9cdcdc; border: 2px solid; border-color: #c8ffff #4f8080 #4f8080 #c8ffff; }
.field.selected { background: #ffc850; font-size: 12px; padding-left: 2px; margin-top: 2px; }
.listwrap { flex: 1; min-height: 0; display: flex; margin: 4px 0 0 -3px; }
.list {
  width: 134px;
  flex: none;
  display: flex;
  flex-direction: column;
  justify-content: flex-end;
  gap: 3px;
  overflow: hidden;
  padding: 0 2px 10px 1px;
  border: solid;
  border-width: 2px 8px 6px 6px;
  border-color: #2e6658 #88e4cc #88e4cc #2e6658;
  box-shadow: inset 0 -1px #000, inset -1px 0 #000;
}
.group { flex: none; width: 117px; display: flex; flex-direction: column; gap: 2px; padding: 2px; background: #000; }
.layer { display: grid; grid-template-columns: 14px 18px 81px; height: 14px; align-items: center; }
.tick { appearance: none; margin: 0; width: 14px; height: 14px; border: 2px solid #fff; background: #fff; box-shadow: inset 0 0 0 2px #000; }
.tick:checked { border-color: #0000a8; }
.dot { width: 14px; height: 14px; margin-left: 2px; border-radius: 50%; }
.dot.red { background: #f00; }
.dot.leaf { background: #429800; }
.name { display: flex; justify-content: space-between; align-items: center; height: 14px; padding: 0 2px 0 1px; line-height: 14px; background: #9cdcdc; }
.gold { background: #d8a800; }
.amber { background: #ffc850; }
.green { background: #00a078; }
.white { background: #fff; }
.slate { background: #9cb4bc; }
.grey { background: #d8d8dc; }
.mark { width: 8px; height: 8px; flex: none; }
.scroll { width: 17px; margin-left: 3px; padding: 1px; display: flex; flex-direction: column; align-items: center; gap: 1px; background: #44b09a; border: solid; border-width: 2px; border-color: #2e6658 #88e4cc #88e4cc #2e6658; }
.arrow { width: 12px; height: 12px; flex: none; }
.thumb { flex: 1; width: 12px; background: #54cfb1; border: 2px solid; border-color: #a0f0dc #2e7864 #2e7864 #a0f0dc; }

.canvas { flex: 1; min-width: 0; background: #000; overflow: hidden; }
.art { width: 100%; height: 100%; }

.tools { width: 164px; flex: none; display: flex; flex-direction: column; background: #000; border-left: 2px solid #3c7468; }
.palette { flex: none; display: grid; grid-template-columns: repeat(4, 38px); gap: 2px; padding: 1px 1px 3px; border-right: 2px solid #9cdcdc; border-bottom: 2px solid #9cdcdc; border-top: 1px solid #3c7468; }
.ops { padding-bottom: 1px; border-color: #686868; }
.tool { width: 38px; height: 38px; padding: 1px; background: #9cdcdc; border: 3px solid; border-color: #c8f4f4 #5c9090 #5c9090 #c8f4f4; }
.tool svg { width: 30px; height: 30px; border: 1px solid #000; }
.paper { background: #fff; border-color: #fff #909090 #909090 #fff; }
.ash { background: #d0d0d0; border-color: #f0f0f0 #808080 #808080 #f0f0f0; }
.sun { background: #ffc850; border-color: #ffe0a0 #b08030 #b08030 #ffe0a0; }
.alert { border-color: #e01010 #a81010 #a81010 #e01010; }
.overview { flex: 1; min-height: 0; width: 162px; background: #000; border: 2px solid; border-color: #686868 #b0e8d8 #b0e8d8 #000; border-left: 0; }
.coords { flex: none; height: 44px; margin-bottom: 1px; padding: 7px 0 0 3px; font-size: 15px; line-height: 15px; background: #54cfb1; border: 2px solid; border-color: #3c7468 #88e4cc #b0f0e0 #54cfb1; border-left: 0; }

.popview {
  position: absolute;
  display: flex;
  flex-direction: column;
  padding: 2px;
  background: #d4d0c8;
  border: 2px solid;
  border-color: #d4d0c8 #585850 #585850 #d4d0c8;
  box-shadow: inset 1px 1px #fff;
}
.first { left: 132px; top: 117px; width: 506px; height: 352px; }
.second { left: 730px; top: 100px; width: 545px; height: 404px; }
.poptitle { flex: none; height: 18px; display: flex; align-items: center; padding: 0 2px 0 1px; background: linear-gradient(90deg, #808080, #c0c0c0); color: #d4d0c8; }
.popbody { flex: 1; min-height: 0; display: flex; background: #000; }
.popart { flex: 1; min-width: 0; height: 100%; background: #000; border: solid; border-width: 4px 3px 3px 2px; border-color: #2e6658 #a8e8d8 #a8e8d8 #2e6658; }
.poptools { width: 36px; flex: none; margin: 2px 0 1px 1px; display: flex; flex-direction: column; background: #54cfb1; border-left: 1px solid #000; border-right: 1px solid #000; }
.cell { height: 35px; padding: 2px; background: #60c4ac; border: solid #000; border-width: 0 1px 2px 0; }
.cell button { width: 29px; height: 29px; padding: 2px; display: block; background: #9cdcdc; border: 2px solid; border-color: #b8ffff #5c9090 #5c9090 #b8ffff; }
.cell svg { width: 21px; height: 21px; border: 1px solid #000; }
.popfoot { flex: none; height: 29px; padding: 2px; background: #60c4ac; border: 1px solid #000; }
.popfoot button { width: 100%; height: 23px; font-size: 15px; line-height: 16px; background: #9cdcdc; border: 2px solid; border-color: #c0f8f8 #5c9090 #5c9090 #c0f8f8; }

.command { flex: none; height: 33px; display: flex; gap: 1px; padding: 1px 2px 1px 1px; border-bottom: 1px solid #000; background: #000; }
.cmd { width: 32px; height: 31px; display: grid; place-items: center; background: #ffffd0; border: 2px solid; border-color: #ffffd0 #d0d0a8 #d0d0a8 #ffffd0; }
.cmd svg { width: 22px; height: 22px; border: 1px solid #000; }
.cmd.on { width: 28px; border-color: #48b89c; }
.bang { width: 31px; border-color: #48b89c; }
.xy { width: 48px; background: #ffffd0; line-height: 32px; padding-left: 3px; white-space: pre; }
.entry { width: 172px; min-width: 0; margin: 0; background: #ffffd0; border: 3px solid; border-color: #a8a888 #f8f8d8 #f8f8d8 #a8a888; border-radius: 0; font: inherit; }
.message { flex: 1; background: #ffffd0; line-height: 32px; padding-left: 2px; white-space: nowrap; }
.unitbox { width: 78px; padding: 2px 2px 2px 6px; background: #54cfb1; }
.unit { width: 100%; height: 27px; display: flex; align-items: center; justify-content: space-between; padding: 0 5px; font-size: 15px; background: #54cfb1; border: 2px solid; border-color: #a0f0dc #2e7864 #2e7864 #a0f0dc; }
.knob { width: 12px; height: 7px; border: 2px solid; border-color: #a0f0dc #2e7864 #2e7864 #a0f0dc; }

.status { flex: none; height: 37px; padding: 2px 3px 3px 2px; background: #d4d8d4; border-top: 1px solid #688; border-bottom: 1px solid #555; }
.statustext { height: 27px; margin-top: 1px; text-align: center; line-height: 22px; background: #b4ffff; border: 2px solid; outline: 1px solid #000; border-color: #e8ffff #60a0a0 #60a0a0 #e8ffff; white-space: nowrap; overflow: hidden; }
```
